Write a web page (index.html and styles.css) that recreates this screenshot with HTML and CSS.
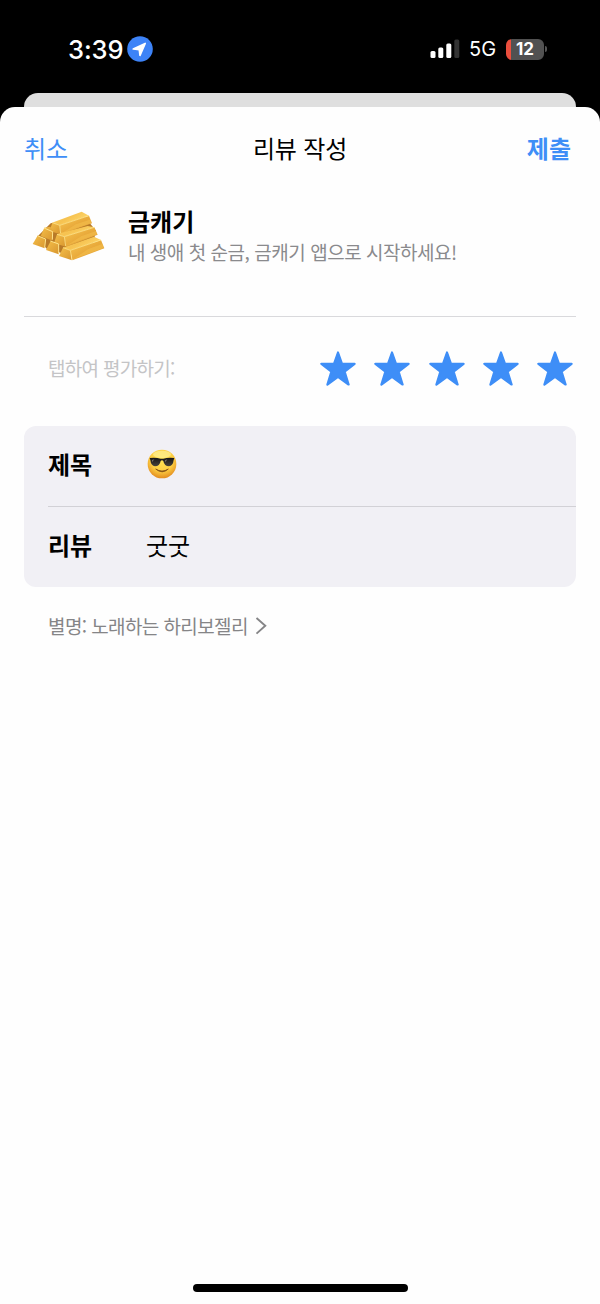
FILE: index.html
```html
<!DOCTYPE html>
<html lang="ko">
<head>
<meta charset="utf-8">
<title>리뷰 작성</title>
<link rel="stylesheet" href="styles.css">
</head>
<body>
<div class="status">
  <div class="clock">
    <span class="time">3:39</span>
    <svg class="location" viewBox="0 0 26 26"><circle cx="13" cy="13" r="12.8" fill="#3d83f7"/><path d="M6.3 13 18.2 7.5 13 19.3 12.3 13.7Z" fill="#fff" stroke="#fff" stroke-width="1.7" stroke-linejoin="round"/></svg>
  </div>
  <div class="indicators">
    <svg class="signal" viewBox="0 0 30 20"><rect x="0.5" y="12" width="5" height="7" rx="1.5" fill="#fff"/><rect x="8.3" y="8.5" width="5" height="10.5" rx="1.5" fill="#fff"/><rect x="16.3" y="4.5" width="5" height="14.5" rx="1.5" fill="#fff"/><rect x="24.3" y="0.5" width="5" height="18.5" rx="1.5" fill="#333"/></svg>
    <span class="network">5G</span>
    <span class="battery"><span class="battery-body">12</span><span class="battery-tip"></span></span>
  </div>
</div>
<div class="back-card"></div>
<main class="sheet">
  <header class="nav">
    <span class="cancel">취소</span>
    <span class="nav-title">리뷰 작성</span>
    <span class="submit">제출</span>
  </header>
  <section class="app">
    <svg class="gold" viewBox="0 0 300 225">
      <defs>
        <linearGradient id="top" x1="0" y1="0" x2="1" y2="0.6"><stop offset="0" stop-color="#fbd266"/><stop offset="0.5" stop-color="#f6c250"/><stop offset="1" stop-color="#ffda70"/></linearGradient>
        <linearGradient id="side" x1="0" y1="0" x2="1" y2="1"><stop offset="0" stop-color="#f8c853"/><stop offset="0.5" stop-color="#e9aa3b"/><stop offset="1" stop-color="#e3a63a"/></linearGradient>
        <linearGradient id="end" x1="0" y1="0" x2="1" y2="1"><stop offset="0" stop-color="#f5bf49"/><stop offset="1" stop-color="#d8962f"/></linearGradient>
      </defs>
      <path d="M50 112 92 70 192 48 228 92 215 150 145 165 80 146Z" fill="#b87a28"/>
      <path d="M97 69 104 65 185 35 207 47 119 76Z" fill="url(#top)"/>
      <path d="M207 47 216 70 122 103 119 76Z" fill="url(#side)"/>
      <path d="M97 68 119 76 121 103 89 93Z" fill="url(#end)"/>
      <path d="M97 68 119 76 207 47M119 76 122 102" fill="none" stroke="#ffe48a" stroke-width="2.5"/>
      <path d="M73 83 91 80 99 92 97 122 62 108Z" fill="url(#end)"/>
      <path d="M72 84 98 95 97 119" fill="none" stroke="#ffe48a" stroke-width="3"/>
      <path d="M111 103 122 99 203 78 223 82 133 110Z" fill="url(#top)"/>
      <path d="M223 82 233 104 138 140 133 110Z" fill="url(#side)"/>
      <path d="M111 103 133 110 137 140 102 129Z" fill="url(#end)"/>
      <path d="M111 103 133 110 223 82M133 110 137 138" fill="none" stroke="#ffe48a" stroke-width="2.5"/>
      <path d="M53 107 77 117 74 145 38 132Z" fill="url(#end)"/>
      <path d="M52 107 77 117 74 143" fill="none" stroke="#ffe48a" stroke-width="3"/>
      <path d="M92 123 116 132 116 163 78 150Z" fill="url(#end)"/>
      <path d="M91 123 116 132 116 160" fill="none" stroke="#ffe48a" stroke-width="3"/>
      <path d="M129 143 222 110 243 120 151 151Z" fill="url(#top)"/>
      <path d="M243 120 253 145 157 181 151 151Z" fill="url(#side)"/>
      <path d="M129 143 151 151 156 181 117 168Z" fill="url(#end)"/>
      <path d="M129 143 151 151 243 120M151 151 156 180" fill="none" stroke="#ffe48a" stroke-width="2.5"/>
      <path d="M126 99 168 73 209 59 214 69ZM141 136 185 108 227 94 231 103ZM160 177 205 147 247 132 251 144Z" fill="#f4c04f" opacity=".55"/>
    </svg>
    <div class="app-text">
      <div class="app-name">금캐기</div>
      <div class="app-subtitle">내 생애 첫 순금, 금캐기 앱으로 시작하세요!</div>
    </div>
  </section>
  <section class="rating">
    <span class="rating-label">탭하여 평가하기:</span>
    <div class="stars">
      <svg class="star" viewBox="0 0 36 36"><path d="M18 1.5 22 12.8H34.6L24.6 20.7 28.6 33.5 18 25.9 7.4 33.5 11.4 20.7 1.4 12.8H14Z"/></svg>
      <svg class="star" viewBox="0 0 36 36"><path d="M18 1.5 22 12.8H34.6L24.6 20.7 28.6 33.5 18 25.9 7.4 33.5 11.4 20.7 1.4 12.8H14Z"/></svg>
      <svg class="star" viewBox="0 0 36 36"><path d="M18 1.5 22 12.8H34.6L24.6 20.7 28.6 33.5 18 25.9 7.4 33.5 11.4 20.7 1.4 12.8H14Z"/></svg>
      <svg class="star" viewBox="0 0 36 36"><path d="M18 1.5 22 12.8H34.6L24.6 20.7 28.6 33.5 18 25.9 7.4 33.5 11.4 20.7 1.4 12.8H14Z"/></svg>
      <svg class="star" viewBox="0 0 36 36"><path d="M18 1.5 22 12.8H34.6L24.6 20.7 28.6 33.5 18 25.9 7.4 33.5 11.4 20.7 1.4 12.8H14Z"/></svg>
    </div>
  </section>
  <section class="form">
    <div class="row row-title">
      <span class="label">제목</span>
      <svg class="emoji" viewBox="0 0 90 90">
        <defs><radialGradient id="face" cx=".5" cy=".35" r=".65"><stop offset="0" stop-color="#ffe554"/><stop offset=".6" stop-color="#fdcf43"/><stop offset="1" stop-color="#e38c20"/></radialGradient>
        <linearGradient id="lens" x1="0" y1="0" x2="0" y2="1"><stop offset="0" stop-color="#161616"/><stop offset="1" stop-color="#48443d"/></linearGradient></defs>
        <circle cx="45" cy="45" r="43" fill="url(#face)"/>
        <ellipse cx="45" cy="16" rx="27" ry="11" fill="#fff39a" opacity=".65"/>
        <path d="M8 27Q27 25 41 29H49Q63 25 82 27L80 33Q78 51 66 52Q52 52 49 36Q45 32 41 36Q38 52 24 52Q12 51 10 33Z" fill="url(#lens)"/>
        <path d="M15 33 22 31 15 40ZM54 34 61 31 55 40Z" fill="#77736a"/>
        <path d="M26 60Q45 72 64 60Q46 77 26 60Z" fill="#784512" stroke="#784512" stroke-width="2" stroke-linejoin="round"/>
      </svg>
    </div>
    <div class="row row-review">
      <span class="label">리뷰</span>
      <span class="value">굿굿</span>
    </div>
  </section>
  <div class="nickname">
    <span class="nickname-text">별명: 노래하는 하리보젤리</span>
    <svg class="chevron" viewBox="0 0 12 20"><path d="M1.5 2 10.3 9.8 1.5 17.6" fill="none" stroke="#858587" stroke-width="1.9"/></svg>
  </div>
  <div class="home-indicator"></div>
</main>
</body>
</html>
```
FILE: styles.css
```css
* { box-sizing: border-box; }
body {
  margin: 0;
  width: 600px;
  height: 1304px;
  display: flex;
  flex-direction: column;
  background: #000;
  color: #000;
  font-family: "Noto Sans CJK KR", sans-serif;
  overflow: hidden;
}
svg { display: block; flex: none; }
.status {
  height: 93px;
  padding: 0 52px 0 68px;
  display: flex;
  justify-content: space-between;
  align-items: flex-start;
  color: #fff;
  font-family: Inter, sans-serif;
}
.clock { display: flex; align-items: center; height: 30px; margin-top: 34px; }
.time { width: 59px; font-size: 25.5px; font-weight: 500; letter-spacing: -0.1px; white-space: nowrap; }
.location { width: 26px; height: 26px; }
.indicators { display: flex; align-items: center; height: 30px; margin-top: 34px; }
.signal { width: 30px; height: 20px; margin-right: 9px; }
.network { width: 37px; font-size: 20px; font-weight: 400; }
.battery { display: flex; align-items: center; gap: 1px; margin-right: 1px; }
.battery-body {
  width: 38px;
  height: 21px;
  border-radius: 6px;
  background: linear-gradient(90deg, #ea4e3d 5px, #515151 5px);
  font-size: 17px;
  font-weight: 700;
  line-height: 21px;
  text-align: center;
}
.battery-tip { width: 2px; height: 6px; border-radius: 0 2px 2px 0; background: #555; }
.back-card { height: 15px; margin: 0 24px; border-radius: 14px 14px 0 0; background: #dfdfdf; flex: none; }
.sheet {
  flex: 1;
  display: flex;
  flex-direction: column;
  margin-top: -1px;
  border-radius: 15px 15px 0 0;
  background: #fefefe;
}
.nav {
  display: grid;
  grid-template-columns: 1fr auto 1fr;
  align-items: center;
  height: 84px;
  padding: 0 29px 2px 24px;
  font-size: 24px;
  line-height: 36px;
}
.cancel, .submit { color: #3e8ef7; }
.submit { font-weight: 700; text-align: right; }
.nav-title { padding-left: 5px; letter-spacing: -0.2px; }
.app {
  display: flex;
  height: 126px;
  margin: 0 24px;
  border-bottom: 1px solid #d9d9dc;
}
.gold { width: 100px; height: 75px; margin: 9px 0 0 -4px; }
.app-text { padding: 13px 0 0 8px; }
.app-name { font-size: 24px; font-weight: 700; line-height: 34px; }
.app-subtitle { font-size: 19px; line-height: 28px; letter-spacing: -0.47px; color: #8a8a8d; white-space: nowrap; }
.rating {
  display: flex;
  justify-content: space-between;
  height: 109px;
  padding: 0 27px 0 48px;
}
.rating-label { margin-top: 37px; font-size: 19px; line-height: 28px; letter-spacing: -0.7px; color: #c4c4c6; }
.stars { display: flex; gap: 18.2px; margin-top: 34px; }
.star { width: 36px; height: 36px; fill: #3e8ef7; stroke: #3e8ef7; stroke-width: 2.2; stroke-linejoin: round; }
.form { height: 161px; margin: 0 24px; padding-left: 24px; border-radius: 12px; background: #f1f0f5; }
.row { display: flex; align-items: center; font-size: 24px; line-height: 36px; }
.row-title { height: 81px; border-bottom: 1px solid #d2d1d6; padding-bottom: 4px; }
.row-review { height: 80px; padding-bottom: 4px; }
.label { width: 98px; font-weight: 700; }
.emoji { width: 30px; height: 30px; margin-left: 1px; }
.nickname {
  display: flex;
  align-items: center;
  gap: 7px;
  margin: 25px 0 0 48px;
  font-size: 19px;
  line-height: 28px;
  color: #858587;
}
.nickname-text { letter-spacing: -0.6px; }
.chevron { width: 12px; height: 20px; }
.home-indicator { width: 215px; height: 8px; margin: auto auto 12px 192.5px; border-radius: 4px; background: #000; }
```
